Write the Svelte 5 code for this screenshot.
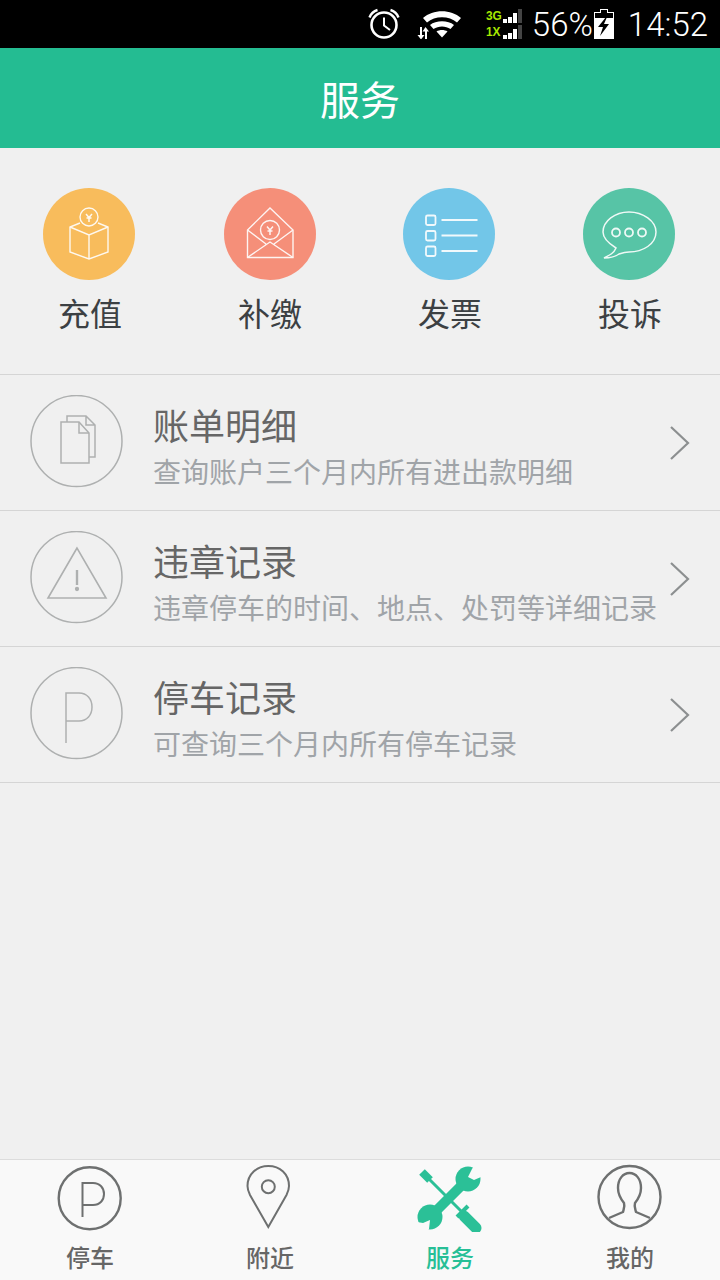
<script>
  const actions = [
    { label: '充值', color: '#f8bc5c', icon: 'box' },
    { label: '补缴', color: '#f58f79', icon: 'mail' },
    { label: '发票', color: '#72c6e8', icon: 'list' },
    { label: '投诉', color: '#57c4a6', icon: 'chat' },
  ]
  const rows = [
    { title: '账单明细', sub: '查询账户三个月内所有进出款明细', icon: 'docs' },
    { title: '违章记录', sub: '违章停车的时间、地点、处罚等详细记录', icon: 'warn' },
    { title: '停车记录', sub: '可查询三个月内所有停车记录', icon: 'park' },
  ]
  const tabs = [
    { label: '停车', icon: 'park' },
    { label: '附近', icon: 'pin' },
    { label: '服务', icon: 'tools', active: true },
    { label: '我的', icon: 'user' },
  ]
</script>

<div class="page">
  <div class="status">
    <svg class="alarm" width="32" height="32" viewBox="0 0 32 32" fill="none" stroke="#fff">
      <circle cx="16" cy="17" r="12.5" stroke-width="2.6" />
      <path d="M16 9.500V17.500L22 22" stroke-width="2" />
      <path d="M1.500 9.500C3 5.500 6 3 9.500 2M30.500 9.500C29 5.500 26 3 22.500 2" stroke-width="2.400" />
    </svg>
    <svg class="wifi" width="45" height="30" viewBox="0 0 45 30" fill="#fff">
      <path d="M6 9C16 0 34 0 44 9L40 13.500C32 6.500 18 6.500 10 13.500Z" />
      <path d="M13 16C19 11 31 11 37 16L33.500 20C28.500 16.500 21.500 16.500 16.500 20Z" />
      <path d="M19.500 22.500C22.500 20.500 27.500 20.500 30.500 22.500L25 28.500Z" />
      <path d="M3 18H5V26H7.500L4 30.500L0.500 26H3Z" />
      <path d="M7.500 18L11 22.500H9V30.500H7V22.500H4.500Z" transform="translate(1 0)" />
    </svg>
    <div class="net">
      <div class="net-row">
        <span>3G</span>
        <svg width="20" height="14" viewBox="0 0 20 14">
          <rect x="0" y="10" width="4" height="4" fill="#fff" />
          <rect x="5" y="8" width="4" height="6" fill="#fff" />
          <rect x="10" y="4" width="4" height="10" fill="#fff" />
          <rect x="15" y="0" width="4" height="14" fill="#444" />
        </svg>
      </div>
      <div class="net-row">
        <span>1X</span>
        <svg width="20" height="14" viewBox="0 0 20 14">
          <rect x="0" y="10" width="4" height="4" fill="#fff" />
          <rect x="5" y="8" width="4" height="6" fill="#fff" />
          <rect x="10" y="4" width="4" height="10" fill="#fff" />
          <rect x="15" y="0" width="4" height="14" fill="#444" />
        </svg>
      </div>
    </div>
    <span class="pct">56%</span>
    <svg class="batt" width="20" height="30" viewBox="0 0 20 30">
      <path d="M6 0H14V3H20V30H0V3H6ZM1 4V9H19V4H13V1H7V4Z" fill="#fff" fill-rule="evenodd" />
      <path d="M12 8L4 18H9L6 27L15 15H10L13 8Z" fill="#000" />
    </svg>
    <span class="time">14:52</span>
  </div>

  <header>服务</header>

  <section class="actions">
    {#each actions as a}
      <div class="action">
        <div class="badge" style="background: {a.color}">
          <svg width="92" height="92" viewBox="0 0 92 92" fill="none" stroke="#fff" stroke-width="1.400" opacity="0.9">
            {#if a.icon === 'box'}
              <circle cx="46" cy="29" r="9" />
              <path d="M43 26L46 29.500L49 26M46 29.500V34M43.500 30H48.500" stroke-width="1.500" />
              <path d="M37 35L27 39V64L46 71L65 64V39L55 35" />
              <path d="M27 39L46 47L65 39M46 47V71" />
            {:else if a.icon === 'mail'}
              <path d="M23.500 42V69.500H69V42L46 20Z" />
              <path d="M23.500 42L42 56M69 42L50 56M23.500 69.500L46 54L69 69.500" />
              <circle cx="46" cy="42" r="9.500" />
              <path d="M43 38.500L46 42L49 38.500M46 42V47M43.500 43H48.500" stroke-width="1.500" />
            {:else if a.icon === 'list'}
              <g stroke-width="1.800">
                <rect x="23" y="27.500" width="9.500" height="9.500" rx="1.500" />
                <rect x="23" y="43" width="9.500" height="9.500" rx="1.500" />
                <rect x="23" y="58.500" width="9.500" height="9.500" rx="1.500" />
                <path d="M38.500 32H74.500M38.500 47.500H74.500M38.500 63H74.500" />
              </g>
            {:else}
              <path d="M33 60C25 55 20 50 20 44C20 33 32 24 46 24C60 24 73 33 73 44C73 56 60 64 46 64C42 64 39 65 36 66C32 69 27 70 21 70C27 67 31 65 33 60Z" stroke-width="1.500" />
              <circle cx="33" cy="44.500" r="4" stroke-width="1.800" />
              <circle cx="46" cy="44.500" r="4" stroke-width="1.800" />
              <circle cx="59" cy="44.500" r="4" stroke-width="1.800" />
            {/if}
          </svg>
        </div>
        <span>{a.label}</span>
      </div>
    {/each}
  </section>

  <section class="list">
    {#each rows as r}
      <div class="row">
        <svg class="ring" width="94" height="94" viewBox="0 0 94 94" fill="none" stroke="#aeb0b0" stroke-width="1.500">
          <circle cx="46.500" cy="46" r="45.500" />
          {#if r.icon === 'docs'}
            <path d="M31 68V27H49L59 38V68Z" />
            <path d="M49 27V38H59M37 27V21H56L65 30V62H59M56 21V30H65" />
          {:else if r.icon === 'warn'}
            <path d="M47 17L18 67H76Z" stroke-width="1.600" />
            <path d="M47 39V54" stroke-width="2.400" />
            <circle cx="47" cy="58" r="1.400" fill="#aeb0b0" />
          {:else}
            <path d="M36 76V26H49C57 26 62 32 62 40C62 48 57 54 49 54H36" />
          {/if}
        </svg>
        <div class="text">
          <div class="title">{r.title}</div>
          <div class="sub">{r.sub}</div>
        </div>
        <svg class="chev" width="24" height="36" viewBox="0 0 24 36" fill="none" stroke="#8c8f90" stroke-width="2.200">
          <path d="M3 2L20 18L3 34" />
        </svg>
      </div>
    {/each}
  </section>

  <div class="grow"></div>

  <nav>
    {#each tabs as t}
      <div class="tab" class:active={t.active}>
        <svg width="72" height="72" viewBox="0 0 72 72" fill="none" stroke="#6e7070" stroke-width="2.400">
          {#if t.icon === 'park'}
            <circle cx="35.700" cy="38.300" r="31" />
            <path d="M28.500 57V23H39C46 23 50 28 50 34C50 40 46 45 39 45H28.500" stroke-width="2" />
          {:else if t.icon === 'pin'}
            <path d="M34.300 67L16 35C14 31 13.500 28 13.500 26C13.500 14 23 6 34.300 6C46 6 55 14 55 26C55 28 54.500 31 52.500 35Z" stroke-width="2" />
            <circle cx="34.300" cy="26.700" r="6.500" stroke-width="2" />
          {:else if t.icon === 'tools'}
            <g stroke="#2bc097">
              <path d="M8 12L16 20" stroke-width="8" />
              <path d="M14 18L50 54" stroke-width="3" />
              <path d="M50 56L62 68" stroke-width="11" stroke-linecap="round" />
              <path d="M43 57L54 46" stroke-width="4" />
              <path d="M16 57L54 19" stroke-width="10" />
              <circle cx="16" cy="57" r="12.500" fill="#2bc097" stroke="none" />
              <circle cx="54" cy="19" r="12.500" fill="#2bc097" stroke="none" />
              <path d="M16 60L9 63L3 62L11 74L15 69Z" fill="#f9f9f9" stroke="none" />
              <path d="M54 17L58 9L61 4L72 14L67 17L60 20Z" fill="#f9f9f9" stroke="none" />
            </g>
          {:else}
            <circle cx="35.500" cy="37" r="31" />
            <path d="M15 58L29 52C30 48 31 46 30 43C26 38 24 33 24 28C24 19 29 13 35.500 13C42 13 47 19 47 28C47 33 45 38 41 43C40 46 41 48 42 52L56 58" />
          {/if}
        </svg>
        <span>{t.label}</span>
      </div>
    {/each}
  </nav>
</div>

<style>
  :global(body) {
    margin: 0;
  }

  .page {
    display: flex;
    flex-direction: column;
    width: 720px;
    height: 1280px;
    background: #f0f0f0;
    font-family: "Noto Sans CJK SC", "Noto Sans", sans-serif;
    overflow: hidden;
  }

  .status {
    display: flex;
    align-items: center;
    justify-content: flex-end;
    flex: 0 0 48px;
    padding-right: 12px;
    background: #000;
    color: #fff;
    font-family: Roboto, sans-serif;
  }

  .wifi {
    margin-left: 17px;
  }

  .net {
    display: flex;
    flex-direction: column;
    gap: 2px;
    margin-left: 24px;
  }

  .net-row {
    display: flex;
    align-items: center;
    height: 14px;
  }

  .net-row span {
    width: 17px;
    color: #a6e800;
    font-family: "Liberation Sans", sans-serif;
    font-size: 13.500px;
    font-weight: bold;
    line-height: 14px;
    white-space: nowrap;
    transform: scaleX(0.88);
    transform-origin: left center;
  }

  .pct {
    margin-left: 9px;
    font-size: 33px;
    font-weight: 300;
  }

  .batt {
    margin-left: 1px;
  }

  .time {
    margin-left: 14px;
    font-size: 33px;
    font-weight: 300;
  }

  header {
    flex: 0 0 100px;
    background: #24bc92;
    color: #fff;
    font-size: 40px;
    line-height: 100px;
    text-align: center;
  }

  .actions {
    display: grid;
    grid-template-columns: repeat(4, 1fr);
    flex: 0 0 227px;
    box-sizing: border-box;
    padding-top: 40px;
    border-bottom: 1px solid #d5d5d5;
  }

  .action {
    display: flex;
    flex-direction: column;
    align-items: center;
    color: #3c4043;
    font-size: 32px;
    line-height: 46px;
  }

  .badge {
    width: 92px;
    height: 92px;
    margin-bottom: 9px;
    border-radius: 50%;
  }

  .action:not(:nth-child(2)) .badge {
    margin-left: -2px;
  }

  .badge svg {
    display: block;
  }

  .row {
    display: flex;
    align-items: center;
    box-sizing: border-box;
    height: 136px;
    padding: 0 28px 0 30px;
    border-bottom: 1px solid #d5d5d5;
  }

  .ring {
    flex: none;
    margin-bottom: 2px;
  }

  .text {
    flex: 1;
    margin-left: 30px;
    padding-top: 5px;
  }

  .title {
    color: #666;
    font-size: 36px;
    line-height: 50px;
    margin-left: -1px;
  }

  .sub {
    margin-top: 2px;
    margin-left: -1px;
    color: #a0a4a8;
    font-size: 28px;
    line-height: 40px;
    white-space: nowrap;
  }

  .chev {
    flex: none;
  }

  .grow {
    flex: 1;
  }

  nav {
    display: grid;
    grid-template-columns: repeat(4, 1fr);
    flex: 0 0 121px;
    box-sizing: border-box;
    border-top: 1px solid #dcdcdc;
    background: #f9f9f9;
  }

  .tab {
    display: flex;
    flex-direction: column;
    align-items: center;
    color: #666;
    font-size: 24px;
    font-weight: 500;
    line-height: 34px;
  }

  .tab svg {
    flex: none;
  }

  .tab span {
    margin-top: 8px;
  }

  .tab.active {
    color: #27bf96;
  }
</style>
